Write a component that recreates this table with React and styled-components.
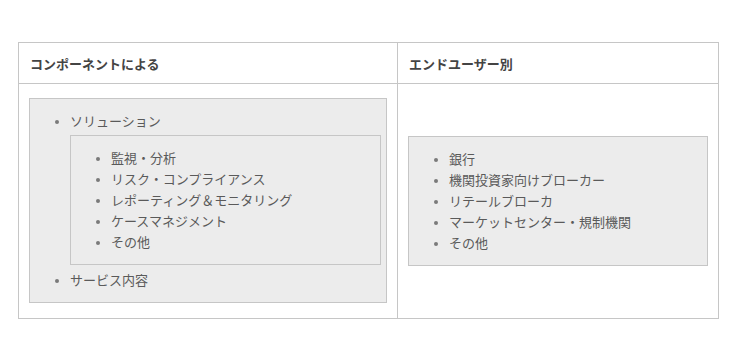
import React from "react";
import styled, { createGlobalStyle } from "styled-components";

const GlobalStyle = createGlobalStyle`
  body {
    margin: 0;
    background: #fff;
    font-family: "Noto Sans CJK JP", "Noto Sans", sans-serif;
  }
`;

const Page = styled.div`
  padding: 42px 0 0 18px;
`;

const Table = styled.table`
  width: 700px;
  border-collapse: collapse;
  table-layout: fixed;
`;

const Col = styled.col`
  width: ${(p) => p.$width}px;
`;

const Head = styled.th`
  height: 40px;
  padding: 0 11px;
  border: 1px solid #c6c6c6;
  text-align: left;
  font-size: 13px;
  font-weight: 700;
  color: #444;
`;

const Cell = styled.td`
  padding: 14px 10px 15px;
  border: 1px solid #c6c6c6;
  vertical-align: middle;
`;

const List = styled.ul`
  margin: ${(p) => (p.$nested ? "4px 0" : "0")};
  padding: 11px 5px 12px 40px;
  background: #ececec;
  border: 1px solid #c6c6c6;
  list-style: disc;
  color: #5a5a5a;
  font-size: 13px;
  line-height: 21px;

  li::marker {
    color: #7a7a7a;
    font-size: 10px;
  }
`;

const Item = styled.li``;

const usersByRole = [
  "銀行",
  "機関投資家向けブローカー",
  "リテールブローカ",
  "マーケットセンター・規制機関",
  "その他",
];

const solutions = [
  "監視・分析",
  "リスク・コンプライアンス",
  "レポーティング＆モニタリング",
  "ケースマネジメント",
  "その他",
];

export default function App() {
  return (
    <Page>
      <GlobalStyle />
      <Table>
        <colgroup>
          <Col $width={379} />
          <Col $width={321} />
        </colgroup>
        <thead>
          <tr>
            <Head>コンポーネントによる</Head>
            <Head>エンドユーザー別</Head>
          </tr>
        </thead>
        <tbody>
          <tr>
            <Cell>
              <List>
                <Item>
                  ソリューション
                  <List $nested>
                    {solutions.map((s) => (
                      <Item key={s}>{s}</Item>
                    ))}
                  </List>
                </Item>
                <Item>サービス内容</Item>
              </List>
            </Cell>
            <Cell>
              <List>
                {usersByRole.map((u) => (
                  <Item key={u}>{u}</Item>
                ))}
              </List>
            </Cell>
          </tr>
        </tbody>
      </Table>
    </Page>
  );
}
